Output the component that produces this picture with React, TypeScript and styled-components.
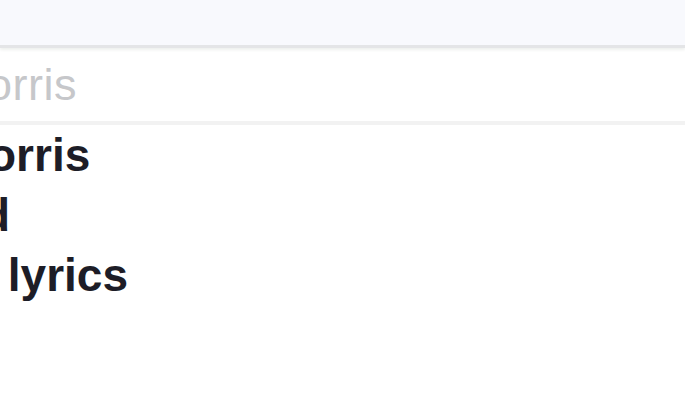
import * as React from "react";
import styled, { createGlobalStyle } from "styled-components";

const GlobalStyle = createGlobalStyle`
  html, body {
    margin: 0;
    padding: 0;
    background: #ffffff;
  }
  body {
    font-family: "Liberation Sans", Arial, sans-serif;
    overflow: hidden;
  }
`;

const SearchWrapper = styled.div`
  width: 685px;
  height: 410px;
  display: flex;
  flex-direction: column;
  overflow: hidden;
  background: #ffffff;

  .top-bar {
    height: 45px;
    background-color: #f8f9fd;
    border-bottom: 3px solid #e4e5e7;
    box-shadow: 0px 2px 3px #eef0ee;
  }
`;

const SearchBox = styled.div`
  height: 73px;
  display: flex;
  align-items: center;
  border-bottom: 4px solid #f2f2f2;
`;

const SearchInput = styled.input<{ indent: number }>`
  width: 100%;
  height: 100%;
  border: none;
  outline: none;
  padding: 0;
  margin: 0;
  background: transparent;
  font-family: "Liberation Sans", Arial, sans-serif;
  font-size: 45px;
  letter-spacing: 0.5px;
  color: #222222;
  text-indent: ${(p) => p.indent}px;

  &::placeholder {
    color: #c6c7ca;
  }
`;

const SuggestionList = styled.ul`
  list-style: none;
  margin: 0;
  padding: 0;
  display: flex;
  flex-direction: column;
`;

const SuggestionItem = styled.li<{ indent: number }>`
  height: 60px;
  line-height: 60px;
  font-size: 46px;
  font-weight: 700;
  color: #1d1d27;
  white-space: pre;
  text-indent: ${(p) => p.indent}px;
  cursor: pointer;
`;

const suggestions = [
  { text: "orris", indent: -12 },
  { text: "d", indent: -18 },
  { text: " lyrics", indent: -5 },
];

export default function App() {
  const [query, setQuery] = React.useState("");

  return (
    <SearchWrapper>
      <GlobalStyle />
      <div className="top-bar" />
      <SearchBox>
        <SearchInput
          indent={-13}
          placeholder="orris"
          value={query}
          onChange={(e) => setQuery(e.target.value)}
        />
      </SearchBox>
      <SuggestionList>
        {suggestions.map((s) => (
          <SuggestionItem key={s.text} indent={s.indent}>
            {s.text}
          </SuggestionItem>
        ))}
      </SuggestionList>
    </SearchWrapper>
  );
}
